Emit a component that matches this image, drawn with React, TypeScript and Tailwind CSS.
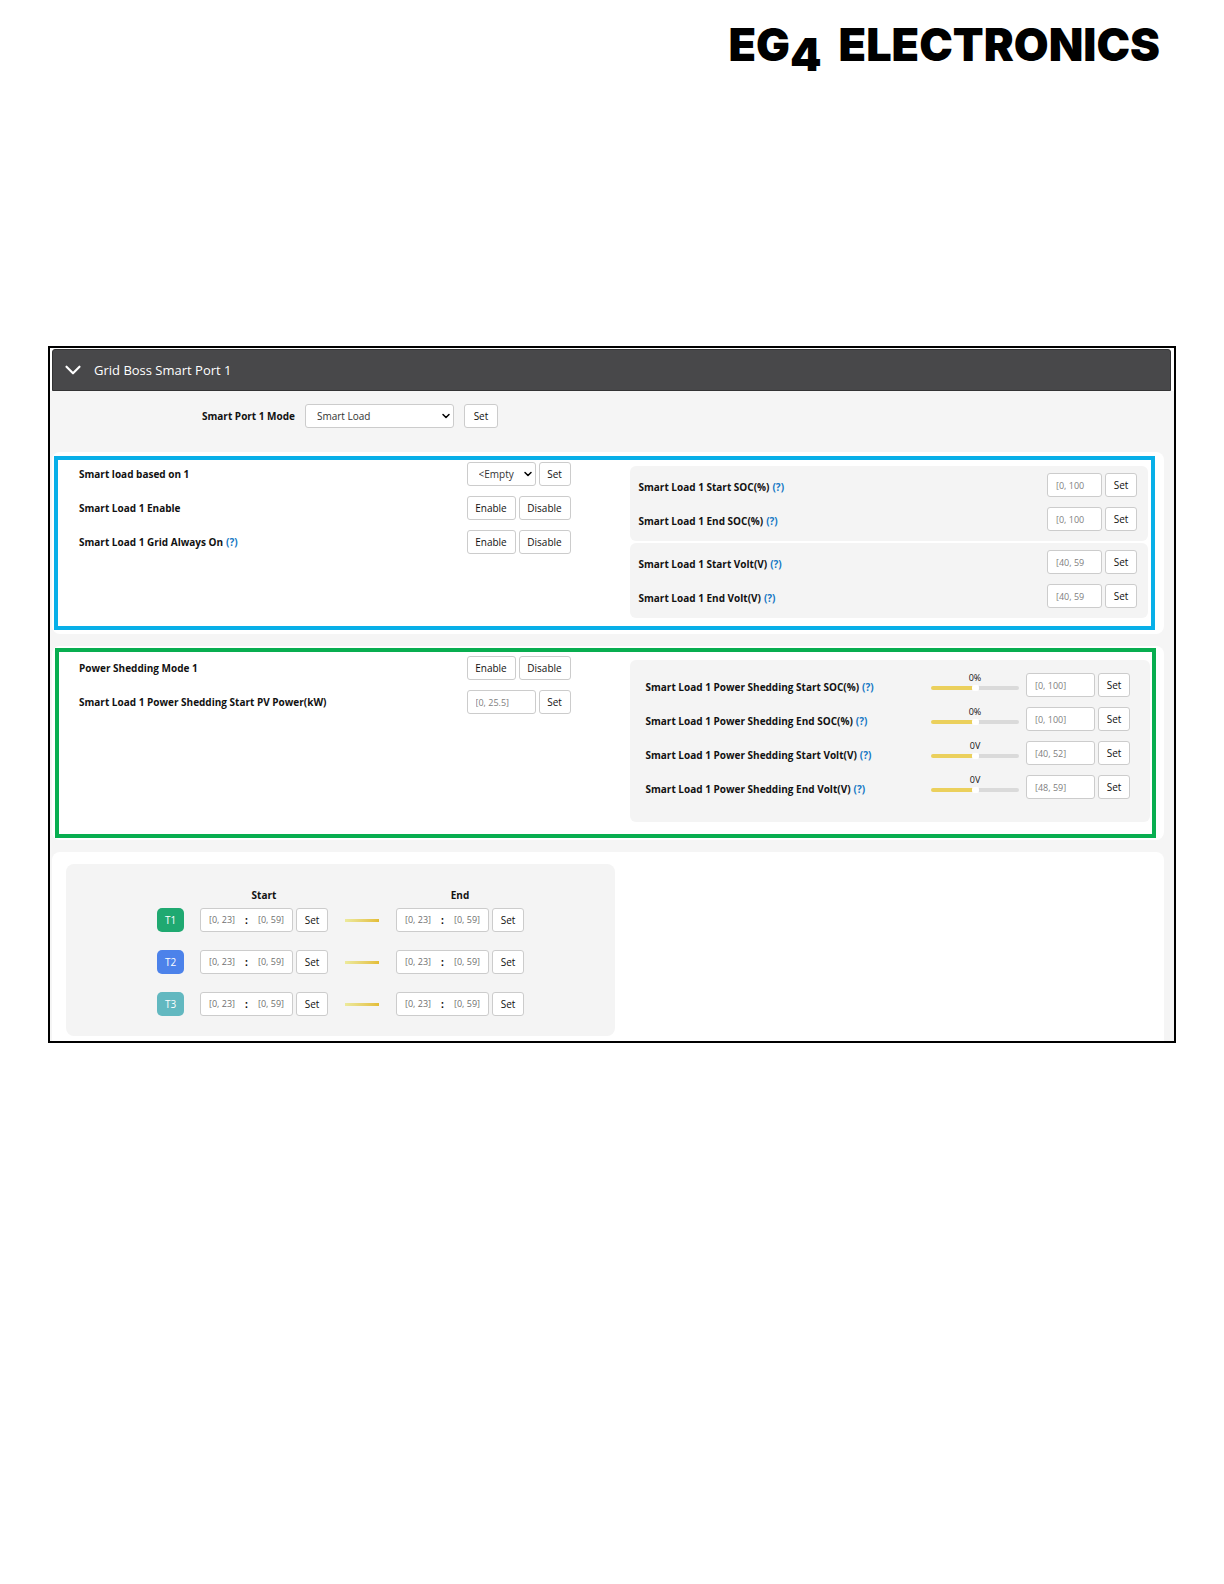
import { useState } from 'react';
import type { ReactNode } from 'react';
import { ChevronDown } from 'lucide-react';

const SOC_ROWS = [
  { label: 'Smart Load 1 Start SOC(%)', range: '[0, 100' },
  { label: 'Smart Load 1 End SOC(%)', range: '[0, 100' },
];

const VOLT_ROWS = [
  { label: 'Smart Load 1 Start Volt(V)', range: '[40, 59' },
  { label: 'Smart Load 1 End Volt(V)', range: '[40, 59' },
];

const SHEDDING_ROWS = [
  { label: 'Smart Load 1 Power Shedding Start SOC(%)', unit: '%', range: '[0, 100]' },
  { label: 'Smart Load 1 Power Shedding End SOC(%)', unit: '%', range: '[0, 100]' },
  { label: 'Smart Load 1 Power Shedding Start Volt(V)', unit: 'V', range: '[40, 52]' },
  { label: 'Smart Load 1 Power Shedding End Volt(V)', unit: 'V', range: '[48, 59]' },
];

const PERIODS = [
  { name: 'T1', color: 'bg-[#1fa971]' },
  { name: 'T2', color: 'bg-[#4c82ea]' },
  { name: 'T3', color: 'bg-[#62b8c0]' },
];

const FIELD = 'h-6 rounded-[3px] border border-[#cccccc] bg-white';

function Button({ children, className = 'w-8' }: { children: ReactNode; className?: string }) {
  return (
    <button type="button" className={`${FIELD} shrink-0 text-[10px] leading-4 text-[#111111] ${className}`}>
      {children}
    </button>
  );
}

function Help() {
  return (
    <a href="#help" className="ml-[3px] text-[#1377c4]">
      (?)
    </a>
  );
}

function Dropdown({ id, options, className }: { id: string; options: string[]; className: string }) {
  return (
    <div className={`relative ${className}`}>
      <select
        id={id}
        className={`${FIELD} block w-full appearance-none pl-[11px] text-[10px] leading-4 text-[#333333]`}
      >
        {options.map((o) => (
          <option key={o}>{o}</option>
        ))}
      </select>
      <ChevronDown className="pointer-events-none absolute top-1.5 right-0.5 size-3" strokeWidth={3} />
    </div>
  );
}

function RangeField({ id, placeholder, className }: { id: string; placeholder: string; className: string }) {
  return (
    <input
      id={id}
      type="text"
      placeholder={placeholder}
      className={`${FIELD} px-2 text-[9px] text-[#444444] placeholder:text-[#808080] ${className}`}
    />
  );
}

type RowProps = {
  label: string;
  id?: string;
  help?: boolean;
  inPanel?: boolean;
  children: ReactNode;
};

function Row({ label, id, help, inPanel, children }: RowProps) {
  return (
    <div className="flex h-6 items-center justify-between">
      <div className={`text-[10px] leading-4 font-bold text-[#111111] ${inPanel ? 'pt-[3px]' : ''}`}>
        {id ? <label htmlFor={id}>{label}</label> : <span>{label}</span>}
        {help && <Help />}
      </div>
      <div className="flex items-center gap-[3px]">{children}</div>
    </div>
  );
}

function EnableDisable() {
  return (
    <>
      <Button className="w-[49px]">Enable</Button>
      <Button className="w-[52px]">Disable</Button>
    </>
  );
}

function LimitPanel({ rows }: { rows: typeof SOC_ROWS }) {
  return (
    <div className="space-y-2.5 rounded-md bg-[#f4f4f4] pt-[7px] pr-[11px] pb-2.5 pl-[9px]">
      {rows.map((r) => (
        <Row key={r.label} label={r.label} id={r.label} help inPanel>
          <RangeField id={r.label} placeholder={r.range} className="w-[55px]" />
          <Button>Set</Button>
        </Row>
      ))}
    </div>
  );
}

function PowerSlider({ label, unit }: { label: string; unit: string }) {
  const [value, setValue] = useState(0);
  const fill = (value + 100) / 2;

  return (
    <div className="mr-1 flex w-[88px] flex-col pb-2.5">
      <output className="text-center text-[9px] leading-4 text-[#111111]">
        {value}
        {unit}
      </output>
      <input
        type="range"
        aria-label={`${label} slider`}
        min={-100}
        max={100}
        value={value}
        onChange={(e) => setValue(Number(e.target.value))}
        style={{ backgroundImage: `linear-gradient(to right, #ebd05c ${fill}%, #dadada ${fill}%)` }}
        className="h-1 w-full appearance-none rounded-full [&::-webkit-slider-thumb]:h-1.5 [&::-webkit-slider-thumb]:w-[7px] [&::-webkit-slider-thumb]:appearance-none [&::-webkit-slider-thumb]:rounded-xs [&::-webkit-slider-thumb]:bg-white"
      />
    </div>
  );
}

function TimeField({ label }: { label: string }) {
  const part = 'w-7 text-center text-[9px] text-[#444444] placeholder:text-[#707070]';
  return (
    <div className="flex gap-[3px]">
      <div className={`${FIELD} flex w-[93px] items-center justify-between px-[7px]`}>
        <input type="text" aria-label={`${label} hour`} placeholder="[0, 23]" className={part} />
        <span className="text-[10px] leading-4 font-bold">:</span>
        <input type="text" aria-label={`${label} minute`} placeholder="[0, 59]" className={part} />
      </div>
      <Button>Set</Button>
    </div>
  );
}

export default function App() {
  return (
    <main className="min-h-screen bg-white font-['Open_Sans','Noto_Sans',sans-serif] text-black">
      <header className="flex h-[346px] justify-end pt-[17px] pr-16">
        <h1 className="font-['Inter',sans-serif] text-[45px] leading-[56px] font-black whitespace-nowrap">
          <span className="mr-2">
            EG<span className="align-sub leading-none">4</span>
          </span>{' '}
          ELECTRONICS
        </h1>
      </header>

      <section className="mx-12 border-2 border-black bg-[#f5f5f5]">
        <div className="border-t border-r-3 border-l-2 border-white bg-white">
          <button
            type="button"
            className="flex h-[42px] w-full items-center gap-2 rounded-t-[3px] border border-[#333334] bg-[#48484a] pl-[7px] text-[13px] leading-5 text-white"
          >
            <ChevronDown className="size-[26px]" strokeWidth={2} />
            Grid Boss Smart Port 1
          </button>
        </div>

        {/* Port mode */}
        <div className="flex items-center pt-[13px] pb-6 pl-[152px]">
          <label htmlFor="mode" className="text-[10px] leading-4 font-bold text-[#111111]">
            Smart Port 1 Mode
          </label>
          <Dropdown id="mode" options={['Smart Load', 'AC Couple', 'Off']} className="mr-2.5 ml-2.5 w-[149px]" />
          <Button className="w-[34px]">Set</Button>
        </div>

        <div className="space-y-3 pr-2.5 pl-0.5">
          {/* Smart load */}
          <div className="rounded-lg bg-white pt-1 pr-[9px] pb-1 pl-0.5">
            <div className="grid grid-cols-2 border-4 border-[#08afe8] pt-0.5 pb-2">
              <div className="space-y-2.5 pr-[34px] pl-[21px]">
                <Row label="Smart load based on 1" id="basedOn">
                  <Dropdown id="basedOn" options={['<Empty', 'SOC', 'Volt']} className="w-[69px]" />
                  <Button>Set</Button>
                </Row>
                <Row label="Smart Load 1 Enable">
                  <EnableDisable />
                </Row>
                <Row label="Smart Load 1 Grid Always On" help>
                  <EnableDisable />
                </Row>
              </div>
              <div className="space-y-0.5 pt-1 pr-[3px] pl-[25px]">
                <LimitPanel rows={SOC_ROWS} />
                <LimitPanel rows={VOLT_ROWS} />
              </div>
            </div>
          </div>

          {/* Power shedding */}
          <div className="rounded-lg bg-white pt-0.5 pr-2 pb-0.5 pl-[3px]">
            <div className="grid grid-cols-2 border-4 border-[#08ae50] pt-1 pb-3">
              <div className="space-y-2.5 pr-[35px] pl-5">
                <Row label="Power Shedding Mode 1">
                  <EnableDisable />
                </Row>
                <Row label="Smart Load 1 Power Shedding Start PV Power(kW)" id="pvPower">
                  <RangeField id="pvPower" placeholder="[0, 25.5]" className="w-[69px]" />
                  <Button>Set</Button>
                </Row>
              </div>
              <div className="pt-1 pr-0.5 pl-6">
                <div className="space-y-2.5 rounded-md bg-[#f4f4f4] pt-[13px] pr-5 pb-[23px] pl-4">
                  {SHEDDING_ROWS.map((r) => (
                    <Row key={r.label} label={r.label} id={r.label} help inPanel>
                      <PowerSlider label={r.label} unit={r.unit} />
                      <RangeField id={r.label} placeholder={r.range} className="w-[69px]" />
                      <Button>Set</Button>
                    </Row>
                  ))}
                </div>
              </div>
            </div>
          </div>

          {/* Time periods */}
          <div className="rounded-t-lg bg-white pt-3 pb-[5px] pl-3.5">
            <div className="w-1/2 rounded-lg bg-[#f4f4f4] pt-[23px] pb-5 pl-[91px]">
              <div className="ml-[43px] flex gap-[68px] text-center text-[10px] leading-4 font-bold text-[#111111]">
                <div className="w-32">Start</div>
                <div className="w-32">End</div>
              </div>
              <div className="mt-[5px] space-y-[18px]">
                {PERIODS.map((p) => (
                  <div key={p.name} className="flex items-center">
                    <span
                      className={`mr-4 flex h-6 w-[27px] items-center justify-center rounded-[5px] text-[10px] leading-4 text-white ${p.color}`}
                    >
                      {p.name}
                    </span>
                    <TimeField label={`${p.name} start`} />
                    <div className="mx-[17px] h-[3px] w-[34px] bg-linear-to-r from-[#ecea9c] to-[#e3bd35]" />
                    <TimeField label={`${p.name} end`} />
                  </div>
                ))}
              </div>
            </div>
          </div>
        </div>
      </section>
    </main>
  );
}
